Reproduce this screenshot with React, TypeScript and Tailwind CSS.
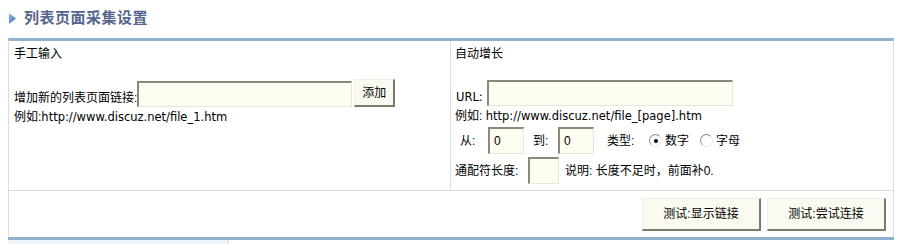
import React from 'react';

const inputCls =
  'h-[26px] bg-[#fdfdf2] border border-t-[#8a8a7a] border-l-[#8a8a7a] border-r-[#e6e6da] border-b-[#e6e6da] border-t-2 border-l-2 outline-none px-1 text-[12px] leading-none align-top';

const btnCls =
  'bg-[#fafaf0] border border-t-[#f0f0e6] border-l-[#f0f0e6] border-r-[#7a7a6a] border-b-[#7a7a6a] border-r-2 border-b-2 text-[12px] text-black';

const latin = 'text-[11.5px] [font-family:"DejaVu_Sans",sans-serif]';

const Radio: React.FC<{ checked?: boolean }> = ({ checked }) => (
  <span className="inline-flex w-[13px] h-[13px] rounded-full bg-white border border-t-[#8a8a8a] border-l-[#8a8a8a] border-r-[#e8e8e8] border-b-[#e8e8e8] items-center justify-center">
    {checked && <span className="w-[4px] h-[4px] rounded-full bg-black" />}
  </span>
);

const App: React.FC = () => {
  return (
    <div
      className="w-[897px] h-[244px] bg-white text-[12px] text-black overflow-hidden"
      style={{ fontFamily: '"Liberation Sans", "Noto Sans CJK SC", sans-serif' }}
    >
      <div className="h-[38px] flex items-center pl-[9px] pb-[1px]">
        <svg width="8" height="11" viewBox="0 0 8 11" className="mr-[7px]">
          <defs>
            <linearGradient id="tri" x1="0" y1="0" x2="1" y2="1">
              <stop offset="0" stopColor="#9fc0e8" />
              <stop offset="1" stopColor="#2f64b4" />
            </linearGradient>
          </defs>
          <polygon points="0,0 7,5.5 0,11" fill="url(#tri)" />
        </svg>
        <span className="text-[15px] font-bold text-[#56668e] tracking-[0.5px]">列表页面采集设置</span>
      </div>

      <div className="ml-[8px] w-[886px] border-t-[3px] border-t-[#8fb3cf] border-l border-r border-[#dcdcdc]">
        <div className="grid grid-cols-[442px_1fr] h-[150px] border-b border-[#dcdcdc]">
          <div className="pl-[5px] pt-[4px] border-r border-[#dcdcdc]">
            <div className="h-[18px] leading-[18px]">手工输入</div>
            <div className="flex items-end mt-[16px]">
              <span className="leading-[16px] mb-[1px]">增加新的列表页面链接:</span>
              <input className={inputCls + ' w-[215px]'} />
              <button className={btnCls + ' w-[41px] h-[28px] ml-[2px] self-start'}>添加</button>
            </div>
            <div className="mt-[2px] leading-[16px]">
              例如:<span className={latin}>http://www.discuz.net/file_1.htm</span>
            </div>
          </div>
          <div className="pl-[4px] pt-[4px]">
            <div className="h-[18px] leading-[18px]">自动增长</div>
            <div className="flex items-end mt-[17px]">
              <span className={latin + ' leading-[16px] mb-[1px] ml-[1px] mr-[4px]'}>URL:</span>
              <input className={inputCls + ' w-[246px]'} />
            </div>
            <div className="mt-[2px] leading-[16px]">
              例如: <span className={latin}>http://www.discuz.net/file_[page].htm</span>
            </div>
            <div className="flex items-center mt-[3px] h-[27px]">
              <span className="ml-[5px] w-[28px]">从:</span>
              <input className={inputCls + ' w-[36px] h-[27px]'} defaultValue="0" />
              <span className="ml-[9px] w-[25px]">到:</span>
              <input className={inputCls + ' w-[36px] h-[27px]'} defaultValue="0" />
              <span className="ml-[13px] w-[42px]">类型:</span>
              <span className="inline-flex items-center gap-[3px]">
                <Radio checked />
                数字
              </span>
              <span className="inline-flex items-center gap-[3px] ml-[11px]">
                <Radio />
                字母
              </span>
            </div>
            <div className="flex items-center mt-[3px] h-[27px]">
              <span className="w-[73px]">通配符长度:</span>
              <input className={inputCls + ' w-[31px] h-[27px]'} />
              <span className="ml-[6px]">说明: 长度不足时，前面补0.</span>
            </div>
          </div>
        </div>
        <div className="h-[46px] flex items-center justify-end gap-[6px] pr-[7px]">
          <button className={btnCls + ' w-[119px] h-[33px]'}>测试:显示链接</button>
          <button className={btnCls + ' w-[119px] h-[33px]'}>测试:尝试连接</button>
        </div>
      </div>
      <div className="ml-[8px] w-[886px] border-t-[3px] border-t-[#8fb3cf] flex h-[10px]">
        <div className="w-[221px] bg-[#eef5fc] border-r border-[#dcdcdc]" />
        <div className="flex-1 bg-white" />
      </div>
    </div>
  );
};

export default App;
